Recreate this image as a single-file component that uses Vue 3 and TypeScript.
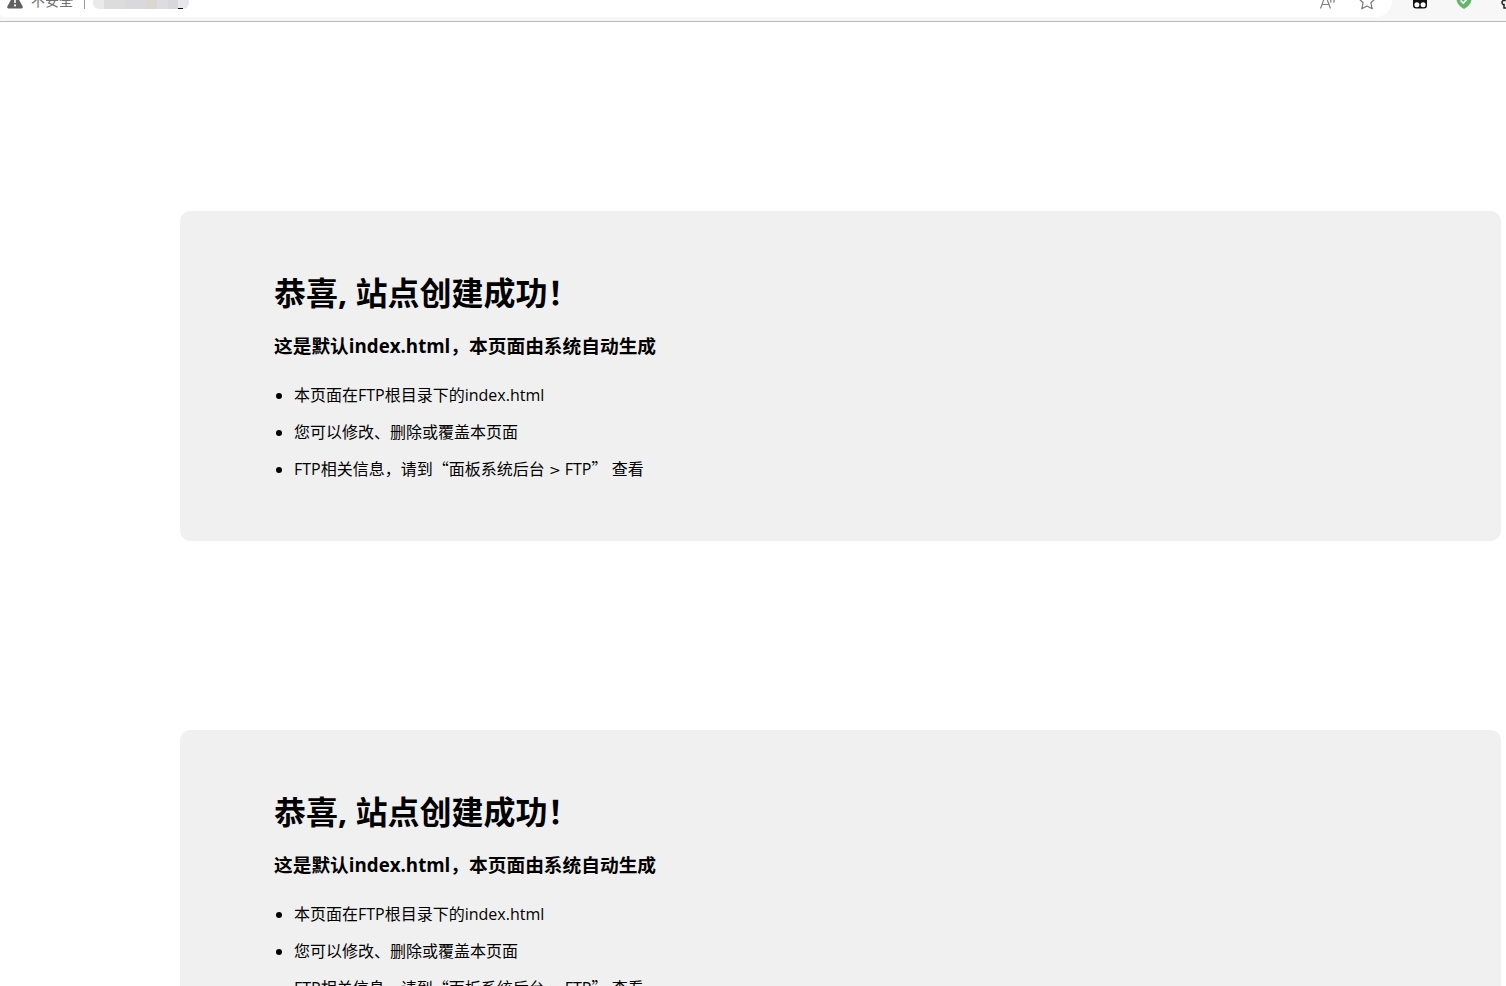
<script setup lang="ts">
interface Notice {
  id: number
  title: string
  subtitle: string
}

const title = '恭喜, 站点创建成功！'
const subtitle = '这是默认index.html，本页面由系统自动生成'
const notices: Notice[] = [
  { id: 1, title, subtitle },
  { id: 2, title, subtitle },
]
const mosaic: string[] = ['#eaeaea', '#dcdcdc', '#dcdcdc', '#d9d8dc', '#d9d8dc', '#dad6d1', '#dcdde0', '#d8d8d9', '#e7e6ed']
</script>

<template>
  <div class="window">
    <header class="toolbar">
      <div class="address">
        <svg class="warning" viewBox="0 0 16 16" width="16" height="16" aria-hidden="true">
          <path d="M7 1.2 Q8 0 9 1.2 L15.7 13.6 Q16.2 15.5 14.5 15.5 H1.5 Q-.2 15.5 .3 13.6Z" fill="#606060" />
          <path d="M8 5V10" stroke="#fff" stroke-width="1.6" />
          <circle cx="8" cy="12.4" r="1.1" fill="#fff" />
        </svg>
        <span class="security">不安全</span>
        <span class="divider"></span>
        <span class="masked">
          <span v-for="(color, i) in mosaic" :key="i" class="tile" :style="{ background: color }"></span>
          <span class="mark"></span>
        </span>
        <span class="spacer"></span>
        <button class="tool read" type="button" aria-label="大声朗读">
          <svg viewBox="0 0 18 18" width="18" height="18" fill="none" stroke="#808080" stroke-width="1.2">
            <path d="M1.5 16.5 L6.5 3 L11.5 16.5 M3.2 12.5H9.8" />
            <path d="M11.2 7.5Q12.4 8.8 11.5 10.5 M14 6.5Q16 8.8 14.5 10.5" />
          </svg>
        </button>
        <button class="tool" type="button" aria-label="收藏">
          <svg viewBox="0 0 18 18" width="18" height="18" fill="none" stroke="#777" stroke-width="1.2" stroke-linejoin="round">
            <path d="M9 1 L11.4 6.2 L17 6.9 L12.9 10.8 L14.2 16.8 L9 14 L3.8 16.8 L5.1 10.8 L1 6.9 L6.6 6.2Z" />
          </svg>
        </button>
      </div>
      <div class="extensions">
        <button class="tool" type="button" aria-label="扩展">
          <svg viewBox="0 0 16 16" width="16" height="16">
            <rect x="1" y="0" width="14" height="15.5" rx="3" fill="#111" />
            <circle cx="4.9" cy="11.8" r="2.5" fill="#fff" />
            <circle cx="11.1" cy="11.8" r="2.5" fill="#fff" />
          </svg>
        </button>
        <button class="tool" type="button" aria-label="安全防护">
          <svg viewBox="0 0 16 16" width="16" height="16">
            <path d="M8 0 L15.5 2 V7 Q14.5 12.5 8 16 Q1.5 12.5 .5 7 V2Z" fill="#62b76b" />
            <path d="M4.6 7.5 L7.3 10 L12 5" fill="none" stroke="#fff" stroke-width="1.7" />
          </svg>
        </button>
        <button class="tool" type="button" aria-label="扩展程序">
          <svg viewBox="0 0 16 16" width="16" height="16" fill="none" stroke="#222" stroke-width="1.5">
            <path d="M4 15 V11.5 H3 Q1 9.5 3 7.5 H5 V2 H15 V15Z" />
          </svg>
        </button>
      </div>
    </header>

    <main class="content">
      <section v-for="notice in notices" :key="notice.id" class="card">
        <h1>{{ notice.title }}</h1>
        <h3>{{ notice.subtitle }}</h3>
        <ul>
          <li>本页面在FTP根目录下的index.html</li>
          <li>您可以修改、删除或覆盖本页面</li>
          <li>FTP相关信息，请到<span class="quote">“</span>面板系统后台 <span class="angle">&gt;</span> FTP<span class="quote">”</span> 查看</li>
        </ul>
      </section>
    </main>
  </div>
</template>

<style>
body {
  margin: 0;
  background: #fff;
}
</style>

<style scoped>
.window {
  height: 100vh;
  overflow: hidden;
  display: flex;
  flex-direction: column;
  color: #000;
  font-family: "Open Sans", "Noto Sans CJK SC", sans-serif;
  font-size: 16px;
}
.toolbar {
  flex: none;
  box-sizing: border-box;
  height: 22px;
  display: flex;
  align-items: flex-end;
  padding-bottom: 4px;
  border-bottom: 1px solid #b9b9b9;
  background: #f7f7f7;
  overflow: hidden;
}
.address {
  flex: 1;
  box-sizing: border-box;
  height: 32px;
  display: flex;
  align-items: center;
  padding: 0 16px 0 7px;
  border-radius: 4px 16px 16px 4px;
  background: #fff;
}
.warning {
  flex: none;
}
.security {
  margin-left: 8px;
  font-size: 14px;
  line-height: 20px;
  color: #707070;
}
.divider {
  width: 1px;
  height: 16px;
  margin: 0 8px 0 11px;
  background: #999;
}
.masked {
  position: relative;
  display: flex;
  width: 96px;
  height: 16px;
  border-radius: 6px;
  overflow: hidden;
}
.tile {
  flex: 1;
}
.mark {
  position: absolute;
  right: 6px;
  bottom: 0;
  width: 5px;
  height: 1px;
  background: #111;
}
.spacer {
  flex: 1;
}
.tool {
  flex: none;
  display: flex;
  padding: 0;
  border: 0;
  background: none;
}
.read {
  margin-right: 21px;
}
.extensions {
  flex: none;
  display: flex;
  align-items: center;
  gap: 28px;
  width: 94px;
  height: 32px;
  padding-left: 20px;
}
.content {
  flex: 1;
  min-height: 0;
  padding: 189px 5px 0 180px;
}
.card {
  box-sizing: border-box;
  margin-bottom: 189px;
  padding: 60px 94px 53px;
  border-radius: 10px;
  background: #f0f0f0;
}
h1 {
  margin: 0;
  font-size: 32px;
  line-height: 44px;
}
h3 {
  margin: 18px 0 0;
  line-height: 26px;
}
ul {
  margin: 18px 0 0;
  padding-left: 20px;
}
li {
  line-height: 37px;
}
.quote {
  font-family: "Noto Sans CJK SC", sans-serif;
  line-height: 16px;
}
.angle {
  font-family: "DejaVu Sans", sans-serif;
  font-size: 14px;
  line-height: 16px;
}
</style>
